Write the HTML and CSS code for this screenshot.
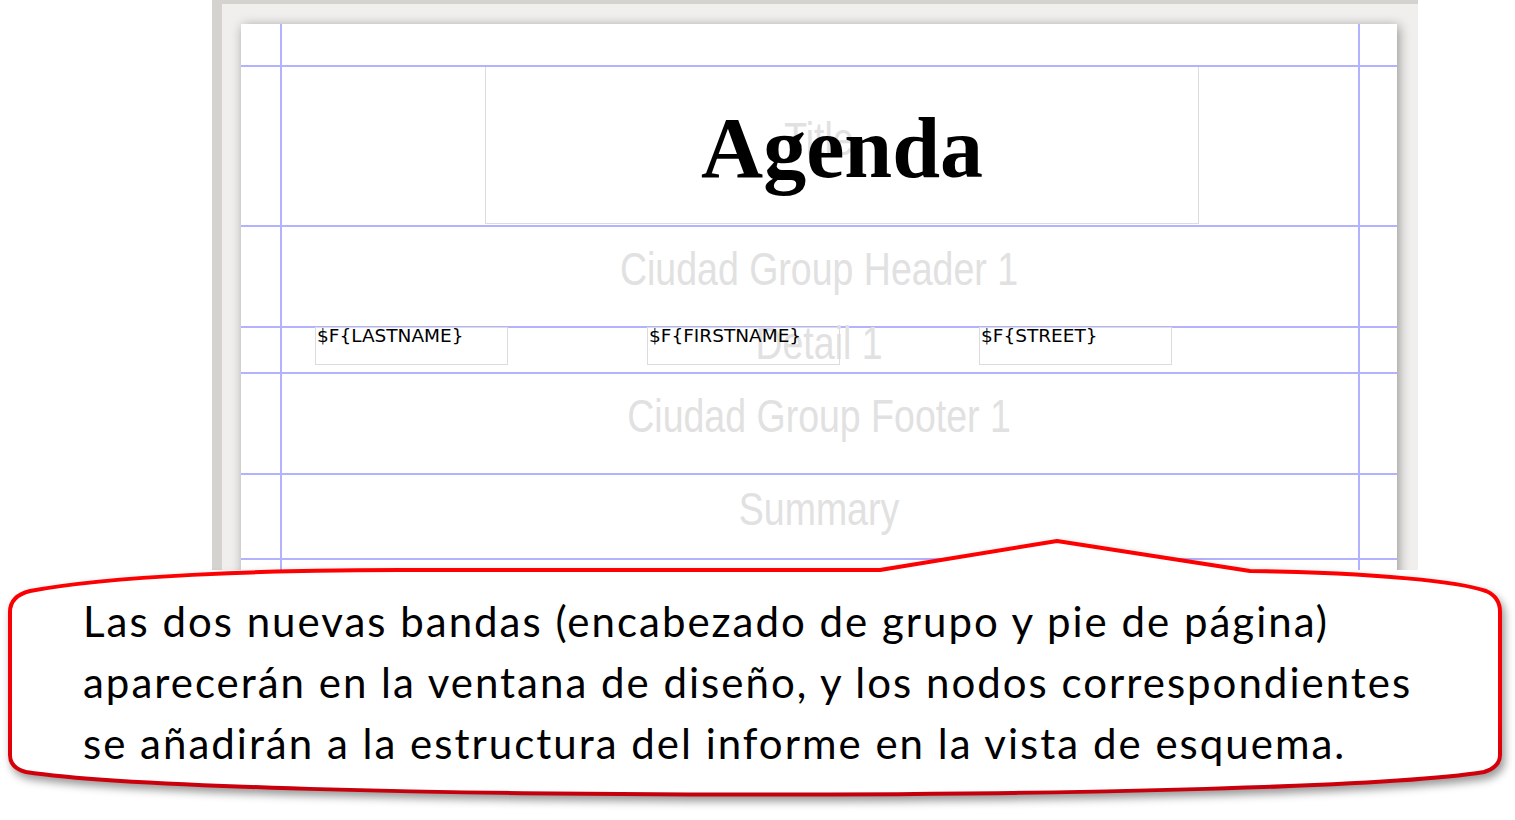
FILE: index.html
```html
<!DOCTYPE html>
<html>
<head>
    <meta charset="UTF-8">
    <title>Agenda - diseño del informe</title>
    <link rel="stylesheet" href="styles.css">
</head>
<body>
    <div class="designer">
        <div class="page">
            <div class="band band-title">
                <span class="band-label">Title</span>
                <div class="title-box">
                    <span class="title-text">Agenda</span>
                </div>
            </div>
            <div class="band band-group">
                <span class="band-label">Ciudad Group Header 1</span>
            </div>
            <div class="band band-detail">
                <span class="band-label">Detail 1</span>
                <div class="fields">
                    <div class="field">$F{LASTNAME}</div>
                    <div class="field">$F{FIRSTNAME}</div>
                    <div class="field">$F{STREET}</div>
                </div>
            </div>
            <div class="band band-group">
                <span class="band-label">Ciudad Group Footer 1</span>
            </div>
            <div class="band band-summary">
                <span class="band-label">Summary</span>
            </div>
            <div class="band band-rest"></div>
        </div>
    </div>

    <div class="callout">
        <svg class="callout-shape" width="1515" height="285" viewBox="0 535 1515 285">
            <defs>
                <linearGradient id="rim" x1="0" y1="0" x2="0" y2="1">
                    <stop offset="0" stop-color="#ff0000"/>
                    <stop offset="0.7" stop-color="#f20008"/>
                    <stop offset="1" stop-color="#c4000c"/>
                </linearGradient>
            </defs>
            <path d="M 10 612 Q 10 596 30 591 C 110 576 260 570 400 570 L 880 570 L 1057 541 L 1250 571 C 1380 573 1460 582 1486 591 Q 1500 597 1500 612 L 1500 755 Q 1500 767 1484 772 C 1300 802 220 802 26 772 Q 10 768 10 755 Z"
                  fill="#ffffff" stroke="url(#rim)" stroke-width="4" stroke-linejoin="round"/>
        </svg>
        <p class="callout-text">Las dos nuevas bandas (encabezado de grupo y pie de página)<br>aparecerán en la ventana de diseño, y los nodos correspondientes<br>se añadirán a la estructura del informe en la vista de esquema.</p>
    </div>
</body>
</html>
```

FILE: styles.css
```css
body {
    margin: 0;
    padding: 0;
    background: #ffffff;
    font-family: "Liberation Sans", Arial, sans-serif;
    position: relative;
    width: 1515px;
    height: 820px;
    overflow: hidden;
}

/* report designer frame */
.designer {
    margin-left: 212px;
    width: 1206px;
    height: 570px;
    box-sizing: border-box;
    border-left: 10px solid #d5d3cf;
    border-top: 4px solid #d5d3cf;
    background: #f0efed;
    padding: 20px 21px 0 19px;
    overflow: hidden;
}

.page {
    background-color: #ffffff;
    background-image:
        linear-gradient(to right, transparent 39px, #b2b2ff 39px, #b2b2ff 41px, transparent 41px),
        linear-gradient(to right, transparent 1117px, #b2b2ff 1117px, #b2b2ff 1119px, transparent 1119px);
    height: 700px;
    padding-top: 41px;
    box-shadow: 2px 2px 11px rgba(0, 0, 0, 0.38);
}

.band {
    border-top: 2px solid #b2b2ff;
    display: grid;
    box-sizing: border-box;
}

.band > * {
    grid-area: 1 / 1;
}

.band-title { height: 160px; }
.band-group { height: 101px; }
.band-detail { height: 46px; }
.band-summary { height: 85px; }
.band-rest { height: 200px; }

.band-label {
    place-self: center;
    font-size: 37.5px;
    color: #e1e1e1;
    white-space: nowrap;
    transform: translateY(-7px) scaleY(1.22);
}

.title-box {
    position: relative;
    z-index: 1;
    justify-self: start;
    margin-left: 244px;
    width: 714px;
    height: 157px;
    box-sizing: border-box;
    border: 1px solid #dcdcdc;
    border-top: none;
    display: flex;
    justify-content: center;
    align-items: center;
}

.title-text {
    font-family: "Liberation Serif", "Times New Roman", serif;
    font-weight: bold;
    font-size: 86px;
    color: #000000;
    margin-top: 6px;
}

.fields {
    position: relative;
    z-index: 1;
    align-self: start;
    display: flex;
    gap: 139px;
    margin-left: 74px;
    margin-top: -1px;
}

.field {
    width: 193px;
    height: 38px;
    box-sizing: border-box;
    border: 1px solid #dcdcdc;
    padding-left: 1px;
    font-family: "DejaVu Sans", sans-serif;
    font-size: 18.5px;
    line-height: 16px;
    color: #000000;
    white-space: nowrap;
}

/* red callout over the designer */
.callout {
    position: absolute;
    left: 0;
    top: 535px;
    width: 1515px;
    height: 285px;
}

.callout-shape {
    display: block;
    filter: drop-shadow(3px 5px 4px rgba(0, 0, 0, 0.4));
}

.callout-text {
    position: absolute;
    left: 83px;
    top: 56px;
    margin: 0;
    font-family: Lato, "Open Sans", sans-serif;
    font-size: 42px;
    letter-spacing: 2px;
    line-height: 61px;
    color: #000000;
    white-space: nowrap;
}
```
